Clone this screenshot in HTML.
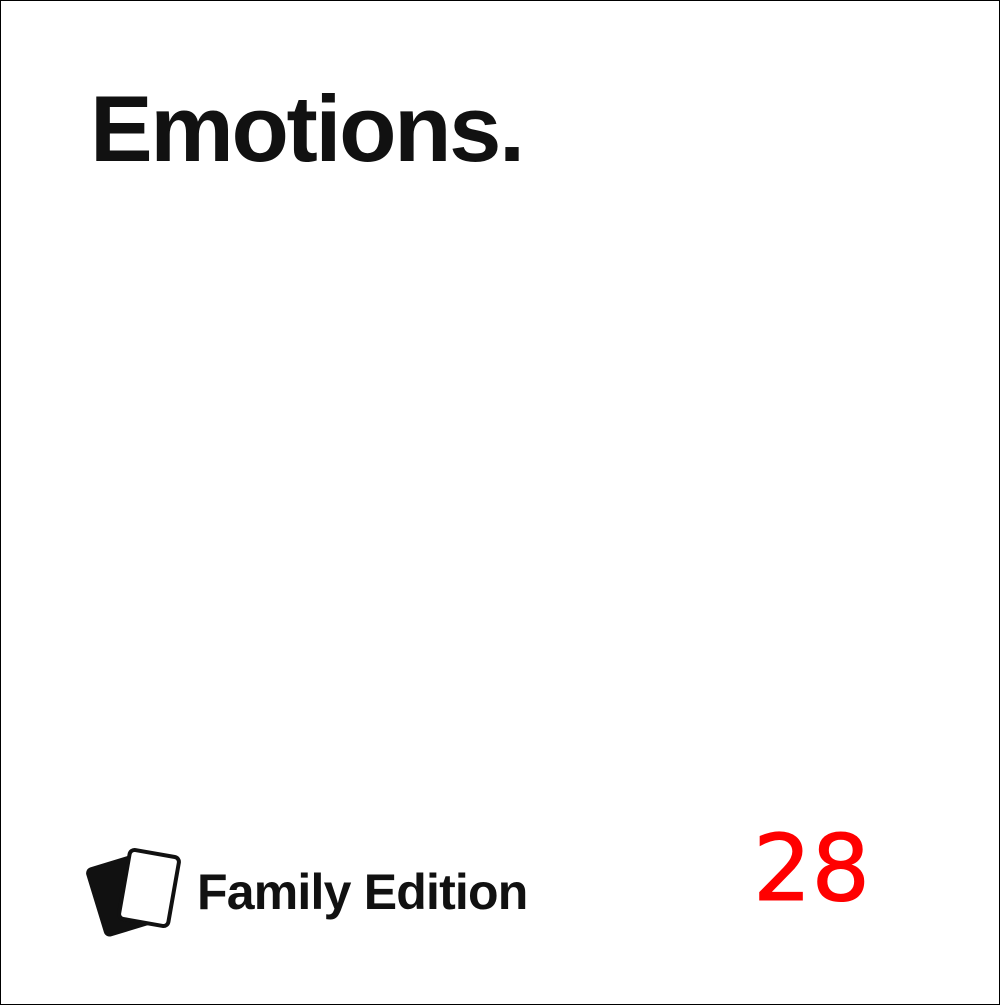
<!DOCTYPE html>
<html><head><style>
html,body{margin:0;padding:0;background:#fff}
.f{position:relative;width:998px;height:1003px;border:1px solid #000;overflow:hidden}
.t{position:absolute;left:89px;top:81px;font:bold 94px/1 "Liberation Sans",sans-serif;letter-spacing:-2.4px;color:#111}
.fe{position:absolute;left:196px;top:866px;font:bold 50px/1 "Liberation Sans",sans-serif;letter-spacing:-0.8px;color:#111}
.n{position:absolute;left:752px;top:822px;font:92px/1 "DejaVu Sans",sans-serif;color:#f00;-webkit-text-stroke:1px #f00}
svg{position:absolute;left:0;top:0}
</style></head><body><div class="f">
<div class="t">Emotions.</div>
<svg width="200" height="1000"><g transform="translate(-1,-1)">
<rect x="94" y="860" width="52" height="72" rx="6" fill="#111" transform="rotate(-17 120 896)"/>
<rect x="124" y="853" width="50" height="70" rx="5" fill="#fff" stroke="#111" stroke-width="4" transform="rotate(10 149 888)"/>
</g></svg>
<div class="fe">Family Edition</div>
<div class="n">28</div>
</div></body></html>
